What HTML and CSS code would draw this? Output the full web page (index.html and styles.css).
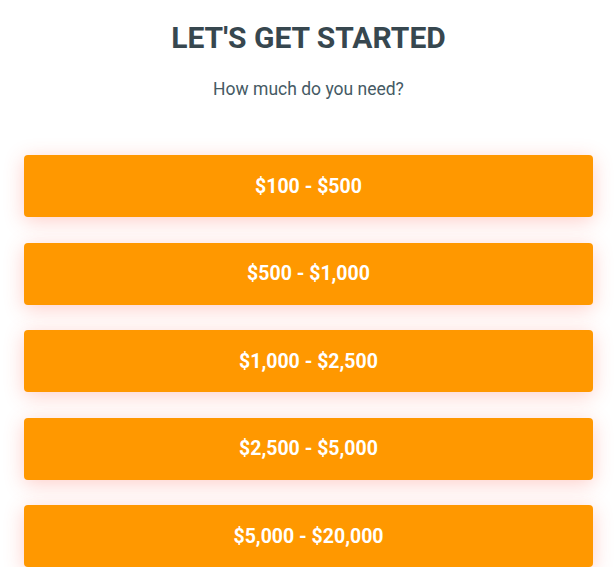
FILE: index.html
```html
<!DOCTYPE html>
<html lang="en">
<head>
  <meta charset="UTF-8" />
  <meta name="viewport" content="width=device-width, initial-scale=1.0" />
  <title>Let's Get Started</title>
  <link rel="stylesheet" href="styles.css">
</head>
<body>
  <div class="step">
    <h1 class="title">LET'S GET STARTED</h1>
    <p class="subtitle">How much do you need?</p>
    <div class="options">
      <button class="option">$100 - $500</button>
      <button class="option">$500 - $1,000</button>
      <button class="option">$1,000 - $2,500</button>
      <button class="option">$2,500 - $5,000</button>
      <button class="option">$5,000 - $20,000</button>
    </div>
  </div>
</body>
</html>
```

FILE: styles.css
```css
body { margin: 0; background: #fff; font-family: Roboto, "Liberation Sans", Arial, sans-serif; }
.step { padding: 19px 22px 0 24px; text-align: center; }
.title { margin: 0; font-size: 30px; font-weight: 700; color: #37474f; line-height: 38px; }
.subtitle { margin: 21px 0 0; font-size: 17.5px; color: #455a64; line-height: 22px; }
.options { display: flex; flex-direction: column; gap: 25.5px; margin-top: 55px; }
.option { height: 62px; border: none; border-radius: 4px; background: #ff9800; color: #fff; font-family: inherit; font-size: 19.5px; font-weight: 700; cursor: pointer; box-shadow: 0 4px 20px rgba(255, 80, 60, 0.28); }
```
